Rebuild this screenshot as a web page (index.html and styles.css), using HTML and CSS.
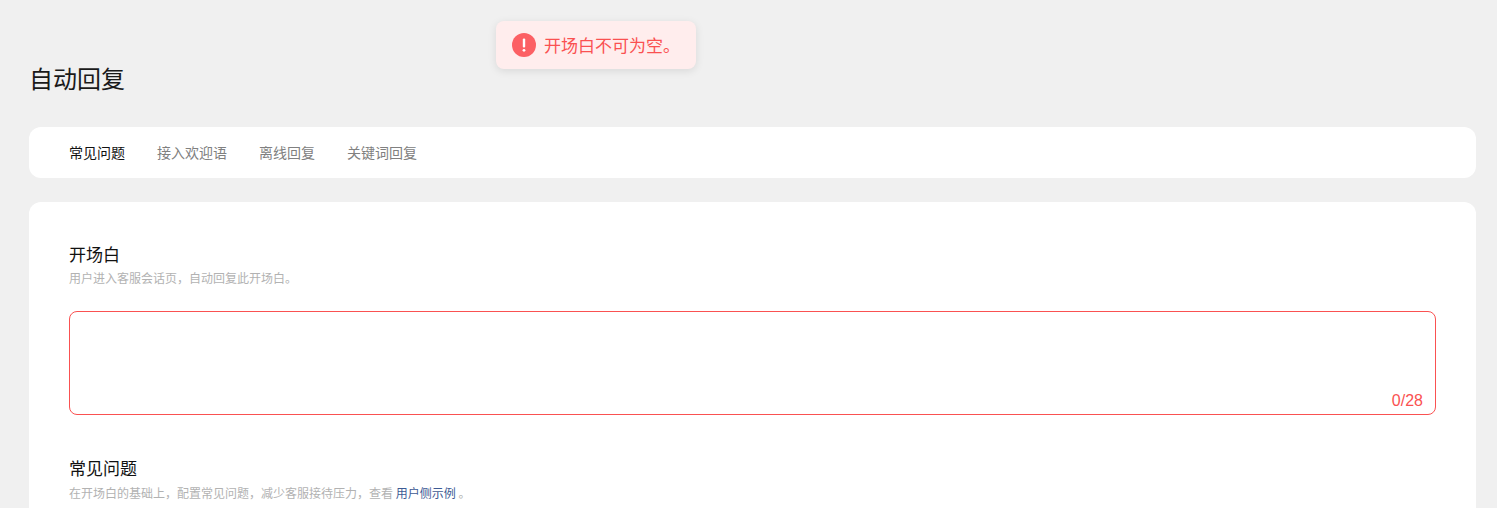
FILE: index.html
```html
<!DOCTYPE html>
<html lang="zh-CN">
<head>
<meta charset="utf-8">
<title>自动回复</title>
<link rel="stylesheet" href="styles.css">
</head>
<body>
<div class="toast">
  <svg class="toast-icon" width="24" height="24" viewBox="0 0 24 24"><circle cx="12" cy="12" r="12" fill="#fc6064"/><rect x="10.8" y="5.5" width="2.4" height="9" rx="1" fill="#fff"/><circle cx="12" cy="17.3" r="1.4" fill="#fff"/></svg>
  <span>开场白不可为空。</span>
</div>
<main class="page">
  <h1 class="title">自动回复</h1>
  <nav class="tabs">
    <a class="tab active">常见问题</a>
    <a class="tab">接入欢迎语</a>
    <a class="tab">离线回复</a>
    <a class="tab">关键词回复</a>
  </nav>
  <section class="card">
    <h2 class="heading">开场白</h2>
    <p class="hint">用户进入客服会话页，自动回复此开场白。</p>
    <div class="input-box"><span class="count">0/28</span></div>
    <h2 class="heading second">常见问题</h2>
    <p class="hint second-hint">在开场白的基础上，配置常见问题，减少客服接待压力，查看 <a class="link">用户侧示例</a> 。</p>
  </section>
</main>
</body>
</html>
```
FILE: styles.css
```css
html, body { margin: 0; height: 508px; overflow: hidden; }
body {
  background: #f0f0f0;
  font-family: "Noto Sans CJK SC", "Liberation Sans", sans-serif;
}
.page { padding: 60px 21px 0 29px; }
.title { margin: 0; font-size: 24px; line-height: 36px; font-weight: 400; color: #1a1a1a; }
.tabs {
  display: flex; gap: 32px; align-items: center;
  box-sizing: border-box; height: 51px; margin-top: 31px; padding: 0 40px 2px;
  background: #fff; border-radius: 12px;
}
.tab { font-size: 14px; color: #808080; }
.tab.active { color: #111; }
.card {
  margin-top: 24px; padding: 40px 40px 0; height: 266px;
  background: #fff; border-radius: 12px 12px 0 0;
}
.heading { margin: 0; font-size: 17px; line-height: 24px; font-weight: 400; color: #111; }
.heading.second { margin-top: 41px; }
.hint { margin: 3px 0 0; font-size: 12px; line-height: 18px; color: #b2b2b2; }
.hint.second-hint { margin-top: 4px; }
.link { color: #3d5a94; }
.input-box {
  position: relative; height: 102px; margin-top: 24px;
  border: 1px solid #fa5151; border-radius: 8px;
}
.count { position: absolute; right: 12px; bottom: 3px; font-family: "Liberation Sans", sans-serif; font-size: 16px; line-height: 20px; color: #fa5151; }
.toast {
  position: absolute; left: 496px; top: 21px;
  display: flex; align-items: center; gap: 8px;
  box-sizing: border-box; width: 200px; height: 48px; padding: 0 16px 1px;
  background: #ffeded; border-radius: 8px;
  box-shadow: 0 2px 8px rgba(0,0,0,.1);
  font-size: 17px; color: #fa5151;
}
.toast-icon { flex: none; }
```
